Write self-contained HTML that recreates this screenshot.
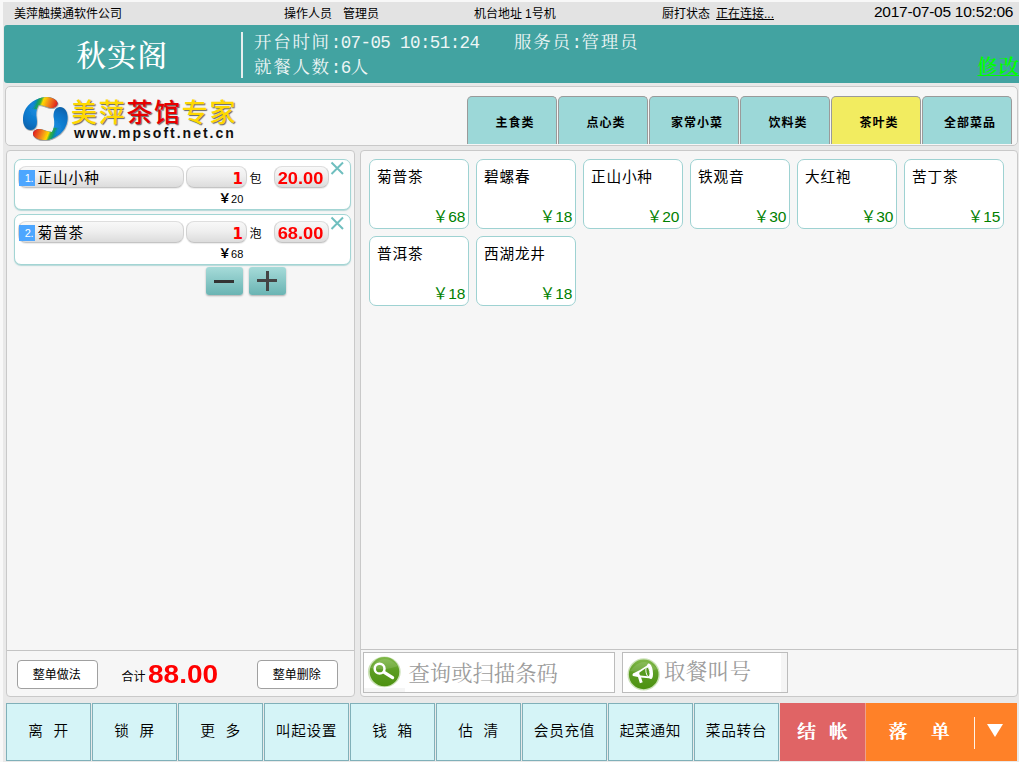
<!DOCTYPE html>
<html lang="zh-CN">
<head>
<meta charset="utf-8">
<title>美萍茶馆专家</title>
<style>
html,body{margin:0;padding:0;}
body{width:1019px;height:762px;overflow:hidden;background:#f8f8f8;position:relative;
  font-family:"Liberation Sans","Noto Sans CJK SC",sans-serif;font-size:12px;color:#000;}
.abs{position:absolute;}
#page{position:absolute;left:3px;top:2px;width:1016px;height:760px;background:#e9e9e9;overflow:hidden;}
#topbar{position:absolute;left:3px;top:2px;width:1016px;height:23px;background:#e3e3e3;}
/* coordinates inside elements below are page coords via body-level absolute */
.t12{position:absolute;font-size:12px;line-height:14px;white-space:nowrap;top:7px;}
#teal{position:absolute;left:4px;top:25px;width:1020px;height:58px;background:#42a3a1;border-radius:3px 0 0 3px;}
.serif{font-family:"Liberation Serif","Noto Serif CJK SC",serif;}
.panel{position:absolute;background:#f6f6f6;border:1px solid #c9c9c9;border-radius:4px;box-sizing:border-box;}

.tab{position:absolute;top:96px;width:90px;height:48px;box-sizing:border-box;background:#9cd8d8;border:1px solid #9a9a9a;border-bottom:none;border-radius:5px 5px 0 0;
  text-align:center;font-weight:bold;font-size:12px;line-height:14px;padding-top:19px;letter-spacing:1px;padding-left:6px;}
.tab.sel{background:#f2ec60;}
.ocard{position:absolute;left:14px;width:337px;height:51px;box-sizing:border-box;background:#fff;border:1px solid #a3d5d4;border-radius:7px;box-shadow:0 1px 1px rgba(120,190,190,.5);}
.pill{position:absolute;height:22px;margin-top:-1px;box-sizing:border-box;border-radius:8px;background:linear-gradient(#f8f8f8,#efefef 45%,#dcdcdc);border:1px solid #d2d2d2;border-top-color:#dedede;border-bottom-color:#c4c4c4;box-shadow:0 1px 1px rgba(0,0,0,.08);}
.num{position:absolute;left:19px;width:16px;height:16px;background:#4da6ff;color:#fff;font-size:11px;line-height:17px;text-align:center;letter-spacing:-0.3px;box-sizing:border-box;padding-left:4px;}
.oname{position:absolute;left:38px;font-size:14.67px;line-height:18px;white-space:nowrap;margin-top:1px;letter-spacing:0.9px;margin-left:-0.5px}
.qty{position:absolute;width:40px;text-align:right;font-weight:bold;color:#f00;font-size:15px;line-height:18px;font-family:"DejaVu Sans","Liberation Sans",sans-serif;margin-left:1px;}
.unit{position:absolute;left:249.5px;font-size:12px;line-height:14px;margin-top:1px;}
.tot{position:absolute;left:273px;width:55px;text-align:center;font-weight:bold;color:#f00;font-size:15.7px;line-height:21px;white-space:nowrap;transform:scaleX(1.16);}
.uprice{position:absolute;left:218.5px;font-size:11px;line-height:12px;white-space:nowrap;}
.uprice b{font-size:12.5px;}
.mcard{position:absolute;width:100px;height:70px;box-sizing:border-box;background:#fff;border:1px solid #9ed2d2;border-radius:7px;}
.mcard .n{position:absolute;left:7px;top:7px;font-size:14.67px;line-height:20px;white-space:nowrap;letter-spacing:0.8px;}
.mcard .p{position:absolute;right:2.5px;top:47.5px;font-size:15.5px;line-height:18px;color:#008000;white-space:nowrap;}
.bbtn{position:absolute;top:703px;width:85px;height:58px;box-sizing:border-box;background:#d5f4f7;border:1px solid #80b0b9;text-align:center;font-size:14.67px;line-height:55px;white-space:pre;word-spacing:5px;font-weight:350;letter-spacing:0.7px;}
.wbtn{position:absolute;top:660px;height:29px;box-sizing:border-box;background:#fff;border:1px solid #a0a0a0;border-radius:4px;text-align:center;font-size:12px;line-height:29.5px;text-indent:-1.5px;}
.sbox{position:absolute;top:652px;height:41px;box-sizing:border-box;background:#fff;border:1px solid #bcbcbc;}
.ph{position:absolute;font-size:21.33px;line-height:28px;color:#9c9c9c;white-space:nowrap;font-family:"Liberation Serif","Noto Serif CJK SC",serif;font-weight:400;}
.hl{font-size:17.5px;line-height:25px;color:#eef6f6;white-space:pre;letter-spacing:1.7px;}
.hl i{font-style:normal;font-family:"Liberation Mono",monospace;font-size:17.5px;letter-spacing:-0.6px;}
</style>
</head>
<body>
<div id="page"></div>
<div id="topbar"></div>

<!-- top status bar -->
<div class="t12" style="left:14px">美萍触摸通软件公司</div>
<div class="t12" style="left:284px">操作人员</div>
<div class="t12" style="left:343px">管理员</div>
<div class="t12" style="left:474px">机台地址</div>
<div class="t12" style="left:525px">1号机</div>
<div class="t12" style="left:662px">厨打状态</div>
<div class="t12" style="left:716px;text-decoration:underline">正在连接...</div>
<div class="abs" style="left:874px;top:3px;font-size:15.5px;letter-spacing:-0.25px;line-height:18px;white-space:nowrap">2017-07-05 10:52:06</div>

<!-- teal header -->
<div id="teal"></div>
<div class="abs serif" style="left:76.5px;top:36px;font-size:29.5px;font-weight:500;letter-spacing:1px;line-height:40px;color:#fff;white-space:nowrap">秋实阁</div>
<div class="abs" style="left:241px;top:32px;width:2px;height:46px;background:#e6eeee"></div>
<div class="abs serif hl" style="left:254px;top:30px">开台时间<i>:07-05 10:51:24</i></div>
<div class="abs serif hl" style="left:514px;top:30px">服务员<i>:</i>管理员</div>
<div class="abs serif hl" style="left:254px;top:54.5px">就餐人数<i>:6</i>人</div>
<div class="abs serif" style="left:977.5px;top:53.6px;font-size:20px;font-weight:600;letter-spacing:1.6px;line-height:26px;color:#00ff00;text-decoration:underline;text-decoration-thickness:1.2px;text-underline-offset:1px;white-space:nowrap">修改</div>

<!-- logo / tab panel -->
<div class="panel" style="left:5px;top:86px;width:1013px;height:60px;border-radius:5px"></div>
<div class="abs" id="logotxt" style="left:71px;top:96.5px;font-size:26px;line-height:32px;font-weight:500;letter-spacing:1.7px;color:#ffd800;white-space:nowrap;text-shadow:1px 1px 1px #666">美萍<span style="color:#e60000">茶馆</span>专家</div>
<div class="abs" id="logourl" style="left:74px;top:124px;font-size:14px;line-height:18px;font-weight:bold;letter-spacing:2.0px;color:#111;white-space:nowrap">www.mpsoft.net.cn</div>

<div class="tab" style="left:467px">主食类</div>
<div class="tab" style="left:558px">点心类</div>
<div class="tab" style="left:649px">家常小菜</div>
<div class="tab" style="left:740px">饮料类</div>
<div class="tab sel" style="left:831px">茶叶类</div>
<div class="tab" style="left:922px">全部菜品</div>

<!-- left order panel -->
<div class="panel" style="left:6px;top:150px;width:349px;height:547px"></div>
<div class="abs" style="left:7px;top:650px;width:347px;height:1px;background:#c4c4c4"></div>

<div class="ocard" style="top:159px"></div>
<div class="pill" style="left:18px;top:167px;width:166px"></div>
<div class="num" style="top:170px">1.</div>
<div class="oname" style="top:168px">正山小种</div>
<div class="pill" style="left:186px;top:167px;width:61px"></div>
<div class="qty" style="left:202px;top:169.8px">1</div>
<div class="unit" style="top:171px">包</div>
<div class="pill" style="left:274px;top:167px;width:55px"></div>
<div class="tot" style="top:167.5px">20.00</div>
<div class="uprice" style="top:193px"><b>￥</b>20</div>

<div class="ocard" style="top:214px"></div>
<div class="pill" style="left:18px;top:222px;width:166px"></div>
<div class="num" style="top:225px">2.</div>
<div class="oname" style="top:223px">菊普茶</div>
<div class="pill" style="left:186px;top:222px;width:61px"></div>
<div class="qty" style="left:202px;top:224.8px">1</div>
<div class="unit" style="top:226px">泡</div>
<div class="pill" style="left:274px;top:222px;width:55px"></div>
<div class="tot" style="top:222.5px">68.00</div>
<div class="uprice" style="top:248px"><b>￥</b>68</div>

<div class="wbtn" style="left:17px;width:81px">整单做法</div>
<div class="abs" style="left:121.5px;top:670px;font-size:12px;line-height:14px">合计</div>
<div class="abs" id="sum" style="left:147.8px;top:658.5px;font-size:25px;line-height:30px;font-weight:bold;color:#f00;transform:scaleX(1.12);transform-origin:0 0">88.00</div>
<div class="wbtn" style="left:257px;width:81px">整单删除</div>

<!-- right menu panel -->
<div class="panel" style="left:360px;top:150px;width:658px;height:547px"></div>
<div class="abs" style="left:361px;top:649px;width:656px;height:1px;background:#c4c4c4"></div>

<div class="mcard" style="left:369px;top:159px"><div class="n">菊普茶</div><div class="p">￥68</div></div>
<div class="mcard" style="left:476px;top:159px"><div class="n">碧螺春</div><div class="p">￥18</div></div>
<div class="mcard" style="left:583px;top:159px"><div class="n">正山小种</div><div class="p">￥20</div></div>
<div class="mcard" style="left:690px;top:159px"><div class="n">铁观音</div><div class="p">￥30</div></div>
<div class="mcard" style="left:797px;top:159px"><div class="n">大红袍</div><div class="p">￥30</div></div>
<div class="mcard" style="left:904px;top:159px"><div class="n">苦丁茶</div><div class="p">￥15</div></div>
<div class="mcard" style="left:369px;top:236px"><div class="n">普洱茶</div><div class="p">￥18</div></div>
<div class="mcard" style="left:476px;top:236px"><div class="n">西湖龙井</div><div class="p">￥18</div></div>

<div class="sbox" style="left:363px;width:252px"></div>
<div class="ph" style="left:408.5px;top:660px">查询或扫描条码</div>
<div class="sbox" style="left:622px;width:166px"></div>
<div class="ph" style="left:664px;top:657.5px;letter-spacing:0.6px">取餐叫号</div>

<!-- bottom bar -->
<div class="bbtn" style="left:6px">离 开</div>
<div class="bbtn" style="left:92px">锁 屏</div>
<div class="bbtn" style="left:178px">更 多</div>
<div class="bbtn" style="left:264px">叫起设置</div>
<div class="bbtn" style="left:350px">钱 箱</div>
<div class="bbtn" style="left:436px">估 清</div>
<div class="bbtn" style="left:522px">会员充值</div>
<div class="bbtn" style="left:608px">起菜通知</div>
<div class="bbtn" style="left:694px">菜品转台</div>
<div class="abs" style="left:780px;top:703px;width:86px;height:58px;background:#e06465"></div>
<div class="abs serif" style="left:797px;top:703px;height:58px;color:#fff;font-weight:600;font-size:18.67px;line-height:57px;white-space:pre;word-spacing:8.5px;text-shadow:0.4px 0 0 #fff">结 帐</div>
<div class="abs" style="left:866px;top:703px;width:151px;height:58px;background:#ff8128"></div>
<div class="abs" style="left:865px;top:703px;width:1px;height:58px;background:#eea08a"></div>
<div class="abs serif" style="left:888.5px;top:703px;height:58px;color:#fff;font-weight:600;font-size:18.67px;line-height:57px;white-space:pre;word-spacing:19px;text-shadow:0.4px 0 0 #fff">落 单</div>
<div class="abs" style="left:974px;top:717px;width:1px;height:32px;background:#fff3e6"></div>
<svg class="abs" style="left:986px;top:723px" width="18" height="15" viewBox="0 0 18 15"><polygon points="1,1 17,1 9,14" fill="#fff"/></svg>

<!-- logo swirl -->
<svg class="abs" style="left:15px;top:90px" width="70" height="56" viewBox="0 0 952 762">
<defs>
<radialGradient id="gb" cx="0.45" cy="0.35" r="0.8"><stop offset="0" stop-color="#1b93e6"/><stop offset="0.6" stop-color="#0a73c6"/><stop offset="1" stop-color="#085a9e"/></radialGradient>
<linearGradient id="g1" gradientUnits="userSpaceOnUse" x1="250" y1="110" x2="560" y2="230">
<stop offset="0.05" stop-color="#0b7fd3" stop-opacity="0"/><stop offset="0.22" stop-color="#119a72"/><stop offset="0.33" stop-color="#3fae3a"/><stop offset="0.42" stop-color="#ffd900"/><stop offset="0.65" stop-color="#f28a1c"/><stop offset="1" stop-color="#e11e1e"/></linearGradient>
<clipPath id="c1"><rect x="0" y="0" width="952" height="262"/></clipPath>
<filter id="sh" x="-10%" y="-10%" width="130%" height="130%"><feDropShadow dx="6" dy="10" stdDeviation="8" flood-color="#000" flood-opacity="0.45"/></filter>
<path id="pc" d="M440 95 C330 95 215 150 150 250 C100 330 95 440 135 500 C165 545 215 555 250 535 C295 510 305 450 295 390 C285 330 285 270 320 205 C380 205 430 235 480 245 C530 250 575 225 580 185 C580 140 520 100 440 95Z"/>
</defs>
<g filter="url(#sh)">
<use href="#pc" fill="url(#gb)"/>
<use href="#pc" fill="url(#g1)" clip-path="url(#c1)"/>
<g transform="rotate(180 412 388)">
<use href="#pc" fill="url(#gb)"/>
<use href="#pc" fill="url(#g1)" clip-path="url(#c1)"/>
</g>
</g>
</svg>

<!-- close icons -->
<svg class="abs" style="left:330px;top:161px" width="15" height="15" viewBox="0 0 15 15"><path d="M1.5 1.5 L13 13 M13 1.5 L1.5 13" stroke="#6fbfbf" stroke-width="2" fill="none"/></svg>
<svg class="abs" style="left:330px;top:216px" width="15" height="15" viewBox="0 0 15 15"><path d="M1.5 1.5 L13 13 M13 1.5 L1.5 13" stroke="#6fbfbf" stroke-width="2" fill="none"/></svg>

<!-- minus / plus -->
<div class="abs" style="left:206px;top:267px;width:37px;height:28px;border-radius:3px;background:linear-gradient(#a6dbd9,#6ab4b3);box-shadow:0 1px 2px rgba(0,0,0,.3)"></div>
<div class="abs" style="left:214px;top:280px;width:20px;height:3px;background:#333"></div>
<div class="abs" style="left:249px;top:267px;width:37px;height:28px;border-radius:3px;background:linear-gradient(#a6dbd9,#6ab4b3);box-shadow:0 1px 2px rgba(0,0,0,.3)"></div>
<div class="abs" style="left:257px;top:279px;width:20px;height:3px;background:#444"></div>
<div class="abs" style="left:266px;top:271px;width:3px;height:20px;background:#444"></div>

<!-- search icon -->
<div class="abs" style="left:364px;top:688px;width:41px;height:4px;background:#f5f5f5"></div>
<svg class="abs" style="left:366px;top:654px" width="36" height="36" viewBox="0 0 36 36">
<defs><linearGradient id="gg" x1="0" y1="0" x2="0" y2="1"><stop offset="0" stop-color="#7fb848"/><stop offset="0.45" stop-color="#5c9d22"/><stop offset="1" stop-color="#4c9010"/></linearGradient></defs>
<ellipse cx="18.3" cy="17.9" rx="16.4" ry="15.4" fill="#6aa832" opacity="0.35"/>
<ellipse cx="18.5" cy="17.7" rx="14.8" ry="14.6" fill="url(#gg)"/>
<path d="M4.5 14 Q18 -3 32 12 Q20 17 4.5 14Z" fill="#fff" opacity="0.12"/>
<circle cx="13.6" cy="14.7" r="4.9" fill="none" stroke="#fff" stroke-width="2.5"/>
<path d="M18.2 18.4 L26.6 23.6" stroke="#fff" stroke-width="3.2" stroke-linecap="round"/>
</svg>
<!-- megaphone icon -->
<div class="abs" style="left:781px;top:653px;width:6px;height:39px;background:#f5f5f5"></div>
<svg class="abs" style="left:626px;top:656.6px" width="36" height="36" viewBox="0 0 36 36">
<circle cx="17.7" cy="17.4" r="16.2" fill="#6aa832" opacity="0.35"/>
<circle cx="17.7" cy="17.4" r="14.8" fill="url(#gg)"/>
<path d="M4 14 Q17 -3 31.5 12 Q20 17 4 14Z" fill="#fff" opacity="0.12"/>
<path d="M6.4 17.9 L7 16.6 Q14 13.6 20.6 8.8 L22.7 6.4 L26 12 L25.4 21.8 L23 21.2 L15.1 20.6 L16.7 25.3 L13.9 26.3 L12 20 L7 19.1 Z" fill="#fff"/>
<ellipse cx="23.9" cy="14.2" rx="2.9" ry="7.9" transform="rotate(-9 23.9 14.2)" fill="#fff"/>
<path d="M13.5 15.6 L20.4 10.8 L21.6 19.2 L14.4 18.4 Q12.6 17.2 13.5 15.6Z" fill="#559a1c"/>
<ellipse cx="21.9" cy="14.9" rx="1.9" ry="4.7" transform="rotate(-9 21.9 14.9)" fill="#559a1c" stroke="#fff" stroke-width="0.9"/>
</svg>

</body>
</html>
